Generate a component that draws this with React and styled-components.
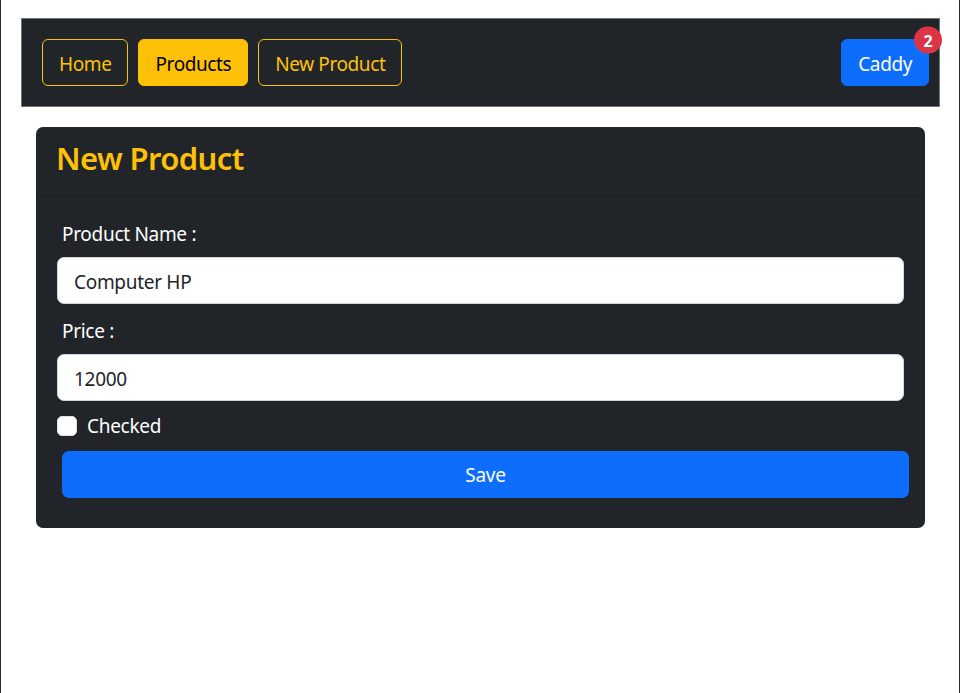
import React from "react";
import styled, { createGlobalStyle, css } from "styled-components";

const Global = createGlobalStyle`
  html, body { margin: 0; padding: 0; background: #fff; }
  body { font-family: "Noto Sans", "Open Sans", sans-serif; }
  * { box-sizing: border-box; }
`;

const Page = styled.div`
  width: 960px;
  min-height: 100vh;
  border-left: 1px solid #2b2b2b;
  border-right: 1px solid #2b2b2b;
  padding: 18px 19px 0 20px;
`;

const Navbar = styled.nav`
  display: flex;
  align-items: center;
  justify-content: space-between;
  background: #212529;
  border: 1px solid #6c757d;
  padding: 20px 10px 20px 20px;
`;

const NavGroup = styled.div`
  display: flex;
  gap: 10px;
`;

const NavButton = styled.button`
  position: relative;
  height: 47px;
  padding: 2px 16px 0;
  font-family: inherit;
  font-size: 19px;
  letter-spacing: -0.4px;
  border-radius: 6px;
  cursor: pointer;
  display: flex;
  align-items: center;
  border: 1px solid #ffc107;
  background: transparent;
  color: #ffc107;
  ${(p) =>
    p.$active &&
    css`
      background: #ffc107;
      color: #000;
    `}
  ${(p) =>
    p.$primary &&
    css`
      background: #0d6efd;
      border-color: #0d6efd;
      color: #fff;
    `}
`;

const Badge = styled.span`
  position: absolute;
  top: 0;
  left: 100%;
  transform: translate(-50%, -50%);
  background: #dc3545;
  color: #fff;
  font-size: 16px;
  font-weight: 700;
  letter-spacing: 0;
  line-height: 1;
  height: 27px;
  min-width: 28px;
  border-radius: 14px;
  display: flex;
  align-items: center;
  justify-content: center;
`;

const Card = styled.section`
  margin: 20px 15px 0 15px;
  background: #212529;
  border-radius: 7px;
  overflow: hidden;
`;

const CardHeader = styled.header`
  height: 70px;
  display: flex;
  align-items: center;
  padding: 0 20px;
  border-bottom: 1px solid #191c1f;
`;

const Title = styled.h2`
  margin: 0;
  color: #ffc107;
  font-size: 31px;
  letter-spacing: -0.6px;
  font-weight: 600;
  line-height: 1.2;
  padding-bottom: 5px;
`;

const CardBody = styled.form`
  padding: 18px 21px 30px 21px;
  display: flex;
  flex-direction: column;
`;

const Label = styled.label`
  color: #fff;
  font-size: 19px;
  letter-spacing: -0.3px;
  line-height: 30px;
  margin: 4px 0 8px 5px;
`;

const Input = styled.input`
  height: 47px;
  width: 100%;
  margin-bottom: 8px;
  border: 1px solid #ced4da;
  border-radius: 7px;
  padding: 2px 16px 0;
  font-family: inherit;
  font-size: 19px;
  letter-spacing: -0.3px;
  color: #212529;
  background: #fff;
  outline: none;
`;

const CheckRow = styled.label`
  display: flex;
  align-items: center;
  gap: 10px;
  color: #fff;
  font-size: 19px;
  letter-spacing: -0.3px;
  line-height: 30px;
  margin: 2px 0 10px;
`;

const CheckBox = styled.span`
  width: 20px;
  height: 20px;
  border-radius: 5px;
  background: #fff;
  border: 1px solid #dee2e6;
  flex: none;
`;

const SaveButton = styled.button`
  height: 47px;
  padding-top: 2px;
  margin-left: 5px;
  margin-right: -5px;
  border: none;
  border-radius: 7px;
  background: #0d6efd;
  color: #fff;
  font-family: inherit;
  font-size: 19px;
  letter-spacing: -0.3px;
  cursor: pointer;
`;

export default function App() {
  return (
    <>
      <Global />
      <Page>
        <Navbar>
          <NavGroup>
            <NavButton>Home</NavButton>
            <NavButton $active>Products</NavButton>
            <NavButton>New Product</NavButton>
          </NavGroup>
          <NavButton $primary>
            Caddy
            <Badge>2</Badge>
          </NavButton>
        </Navbar>
        <Card>
          <CardHeader>
            <Title>New Product</Title>
          </CardHeader>
          <CardBody onSubmit={(e) => e.preventDefault()}>
            <Label>Product Name :</Label>
            <Input defaultValue="Computer HP" />
            <Label>Price :</Label>
            <Input defaultValue="12000" />
            <CheckRow>
              <CheckBox />
              Checked
            </CheckRow>
            <SaveButton type="submit">Save</SaveButton>
          </CardBody>
        </Card>
      </Page>
    </>
  );
}
